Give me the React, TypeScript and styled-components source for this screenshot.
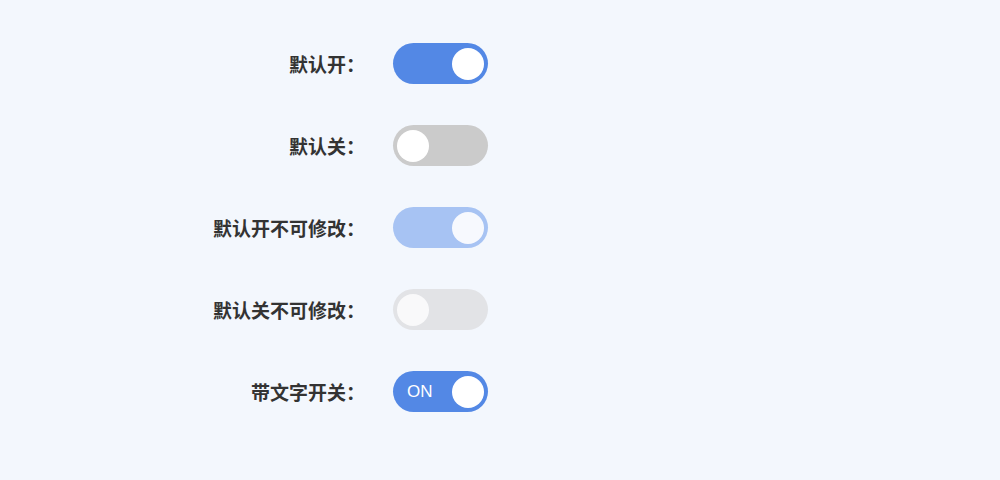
import React, { useState } from "react";
import styled, { createGlobalStyle, css } from "styled-components";

const GlobalStyle = createGlobalStyle`
  html, body { margin: 0; padding: 0; background: #f3f7fd; }
  body { font-family: "Noto Sans CJK SC", "Noto Sans", sans-serif; }
`;

const Page = styled.div`
  width: 1000px;
  height: 480px;
  box-sizing: border-box;
  padding-top: 43px;
  display: flex;
  flex-direction: column;
  gap: 42px;
  background: #f3f7fd;
`;

const Row = styled.div`
  display: grid;
  grid-template-columns: 365px 95px;
  column-gap: 28px;
  align-items: center;
  height: 40px;
`;

const Label = styled.span`
  text-align: right;
  font-size: 19px;
  font-weight: 700;
  color: #333;
  line-height: 40px;
`;

type TrackProps = { $on: boolean; $disabled?: boolean };

const Track = styled.button<TrackProps>`
  position: relative;
  width: 95px;
  height: 41px;
  border: none;
  padding: 0;
  border-radius: 21px;
  cursor: pointer;
  background: ${(p) =>
    p.$on ? (p.$disabled ? "#a7c3f3" : "#5388e5") : p.$disabled ? "#e2e3e6" : "#cbcbcb"};
  ${(p) => p.$disabled && css`cursor: not-allowed;`}
  display: flex;
  align-items: center;
`;

const Knob = styled.span<TrackProps>`
  position: absolute;
  top: 4.5px;
  left: ${(p) => (p.$on ? "59px" : "4px")};
  width: 32px;
  height: 32px;
  border-radius: 50%;
  background: ${(p) => (p.$disabled && !p.$on ? "#f9f9fa" : "#fff")};
  ${(p) => p.$disabled && p.$on && css`background: #f7f9fe;`}
`;

const SwitchText = styled.span`
  position: absolute;
  left: 14px;
  top: 0;
  line-height: 41px;
  color: #fff;
  font-family: "Liberation Sans", Arial, sans-serif;
  font-size: 17px;
`;

function Switch({ on, disabled, text }: { on: boolean; disabled?: boolean; text?: string }) {
  const [v, setV] = useState(on);
  return (
    <Track $on={v} $disabled={disabled} onClick={() => !disabled && setV(!v)}>
      {text && v && <SwitchText>{text}</SwitchText>}
      <Knob $on={v} $disabled={disabled} />
    </Track>
  );
}

export default function App() {
  return (
    <>
      <GlobalStyle />
      <Page>
        <Row>
          <Label>默认开：</Label>
          <Switch on />
        </Row>
        <Row>
          <Label>默认关：</Label>
          <Switch on={false} />
        </Row>
        <Row>
          <Label>默认开不可修改：</Label>
          <Switch on disabled />
        </Row>
        <Row>
          <Label>默认关不可修改：</Label>
          <Switch on={false} disabled />
        </Row>
        <Row>
          <Label>带文字开关：</Label>
          <Switch on text="ON" />
        </Row>
      </Page>
    </>
  );
}
